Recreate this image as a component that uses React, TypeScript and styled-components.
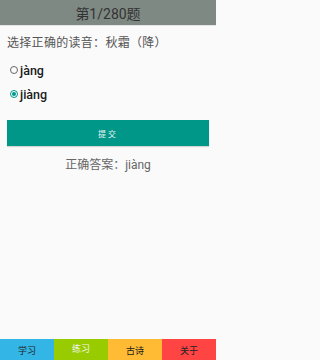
import React, { useState } from "react";
import styled, { createGlobalStyle } from "styled-components";

const GlobalStyle = createGlobalStyle`
    html, body { margin:0; padding:0; background:#fafafa; }
    body { font-family: Roboto, "Noto Sans CJK SC", sans-serif; }
`;

const Page = styled.div`
    display:flex;
    flex-direction:column;
    height:360px;
    width:216px;
    background:#fafafa;
`;
const Header = styled.div`
    height:25px;
    background:#7f8983;
    color:#333;
    font-size:14px;
    display:flex;
    align-items:center;
    justify-content:center;
    border-bottom:1px solid #e6e6e6;
`;
const Content = styled.div`
    flex:1;
    display:flex;
    flex-direction:column;
    padding:0 7px;
`;
const Question = styled.div`
    margin-top:10px;
    font-size:12px;
    letter-spacing:0.3px;
    color:#555;
    line-height:15px;
`;
const Options = styled.div`
    display:flex;
    flex-direction:column;
    gap:10px;
    margin-top:12px;
    padding-left:3px;
`;
const Option = styled.label`
    display:flex;
    align-items:center;
    gap:2px;
    height:14px;
    font-size:12.5px;
    font-weight:500;
    color:#1a1a1a;
    cursor:pointer;
`;
const Radio = styled.span<{ checked: boolean }>`
    width:8px;
    height:8px;
    box-sizing:border-box;
    border-radius:50%;
    border:1px solid ${({ checked }) => checked ? '#009688' : '#666'};
    display:flex;
    align-items:center;
    justify-content:center;
    &::after{
        content:'';
        width:4px;
        height:4px;
        border-radius:50%;
        background:${({ checked }) => checked ? '#009688' : 'transparent'};
    }
`;
const SubmitButton = styled.button`
    margin-top:19px;
    height:26px;
    width:100%;
    border:none;
    background:#009688;
    color:#e8f5f3;
    font-size:8px;
    letter-spacing:2px;
    font-family:inherit;
    box-shadow:0 1px 1px rgba(0,0,0,0.15);
`;
const Answer = styled.div`
    margin-top:9px;
    text-align:center;
    font-size:12px;
    color:#666;
`;
const TabBar = styled.div`
    display:grid;
    grid-template-columns:repeat(4, 1fr);
    height:21px;
`;
const Tab = styled.div<{ bg: string; active?: boolean }>`
    background:${({ bg }) => bg};
    color:${({ active }) => active ? '#f4f4f4' : '#222'};
    font-size:9px;
    display:flex;
    justify-content:center;
    align-items:${({ active }) => active ? 'flex-start' : 'center'};
    padding-top:${({ active }) => active ? '3px' : '2px'};
    box-sizing:border-box;
`;

const options = ['jàng', 'jiàng'];
const tabs = [
    { label: '学习', bg: '#33b5e5' },
    { label: '练习', bg: '#99cc00', active: true },
    { label: '古诗', bg: '#ffbb33' },
    { label: '关于', bg: '#ff4444' },
];

export default function App() {
    const [picked, setPicked] = useState(1);
    return <Page>
        <GlobalStyle />
        <Header>第1/280题</Header>
        <Content>
            <Question>选择正确的读音：秋霜（降）</Question>
            <Options>
                {options.map((o, i) =>
                    <Option key={o} onClick={() => setPicked(i)}>
                        <Radio checked={picked === i} />
                        {o}
                    </Option>
                )}
            </Options>
            <SubmitButton>提交</SubmitButton>
            <Answer>正确答案：jiàng</Answer>
        </Content>
        <TabBar>
            {tabs.map(t => <Tab key={t.label} bg={t.bg} active={t.active}>{t.label}</Tab>)}
        </TabBar>
    </Page>
}
